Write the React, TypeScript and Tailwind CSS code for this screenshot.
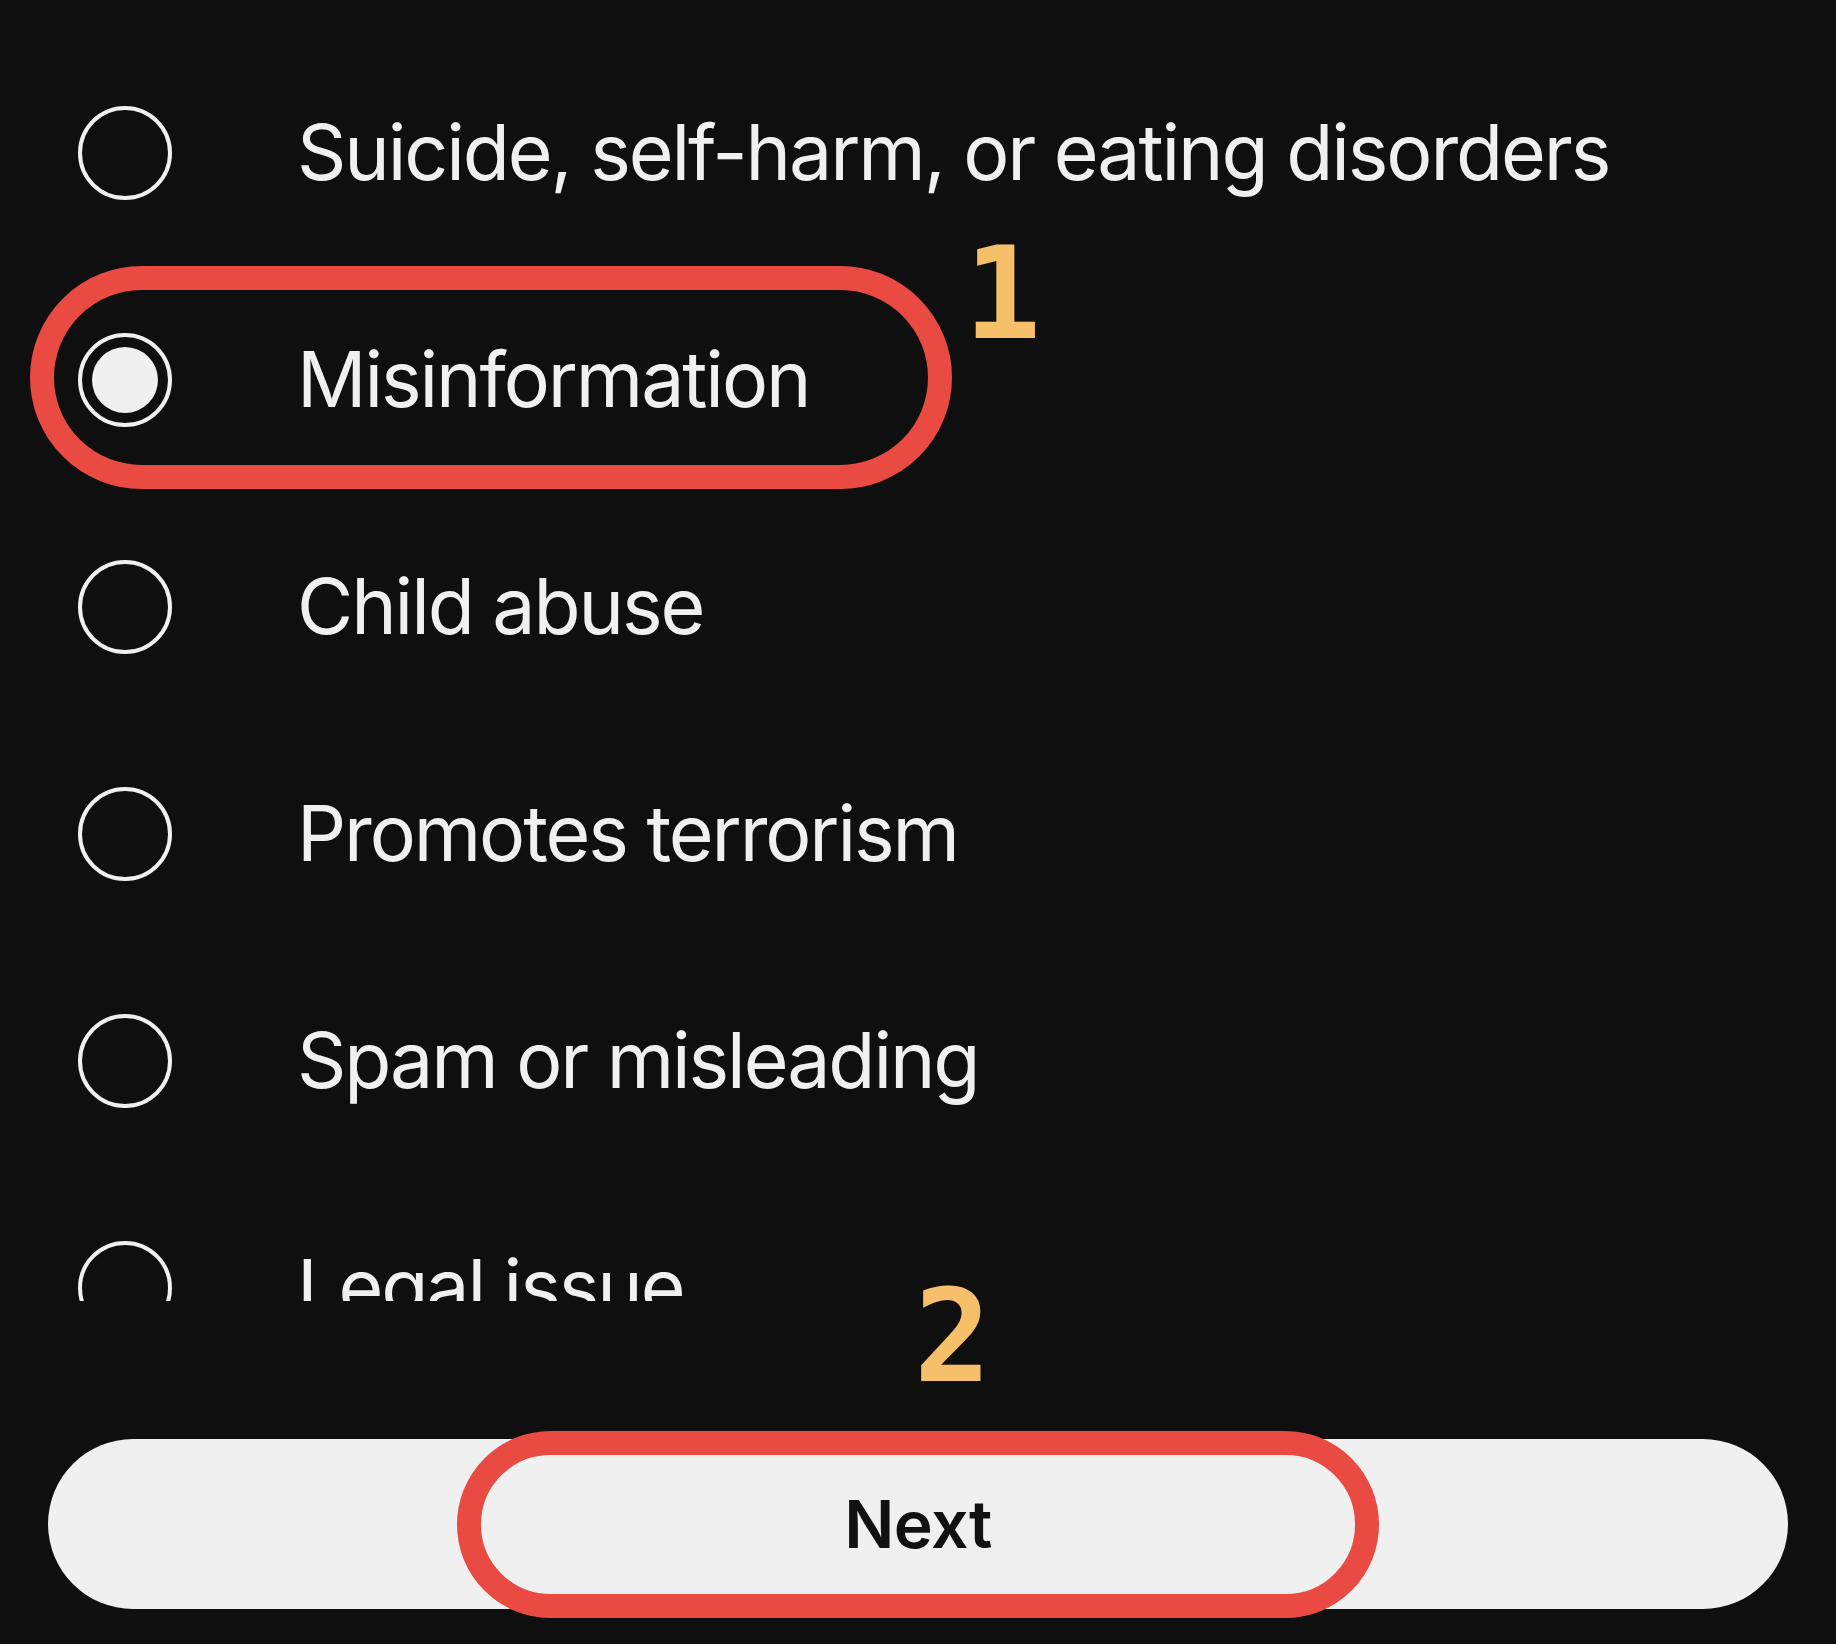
const reasons = [
  "Suicide, self-harm, or eating disorders",
  "Misinformation",
  "Child abuse",
  "Promotes terrorism",
  "Spam or misleading",
  "Legal issue",
];

function Radio({ checked }: { checked: boolean }) {
  return (
    <div className="flex items-center justify-center w-[94px] h-[94px] rounded-full border-[4px] border-[#f0f0f0] shrink-0">
      {checked && <div className="w-[66px] h-[66px] rounded-full bg-[#f0f0f0]" />}
    </div>
  );
}

export default function App() {
  const selected = 1;

  return (
    <div
      className="relative w-full h-[1644px] overflow-hidden bg-[#0f0f0f] text-[#f0f0f0]"
      style={{ fontFamily: "Inter, 'Open Sans', sans-serif" }}
    >
      {/* report reasons list, last row cut off by the scroll area */}
      <div className="h-[1301px] overflow-hidden pt-[39px]">
        {reasons.map((r, i) => (
          <div key={r} className="flex items-center h-[227px] pl-[78px] gap-[125px]">
            <Radio checked={i === selected} />
            <span className="text-[77px] leading-none tracking-[-2.1px]">{r}</span>
          </div>
        ))}
      </div>

      {/* bottom action */}
      <div className="pt-[138px] px-[48px]">
        <button className="w-full h-[170px] rounded-full bg-[#f0f0f0] text-[#111111] text-[66px] font-semibold tracking-[-0.5px]">
          Next
        </button>
      </div>

      {/* tutorial annotations */}
      <div className="absolute left-[30px] top-[266px] w-[922px] h-[223px] rounded-full border-[24px] border-[#e94a42]" />
      <div
        className="absolute left-[964px] top-[230px] text-[128px] leading-none font-bold text-[#f6c06b]"
        style={{ fontFamily: "'DejaVu Sans Mono', monospace" }}
      >
        1
      </div>
      <div className="absolute left-[457px] top-[1431px] w-[922px] h-[187px] rounded-full border-[24px] border-[#e94a42]" />
      <div
        className="absolute left-[914px] top-[1273px] text-[128px] leading-none font-bold text-[#f6c06b]"
        style={{ fontFamily: "'DejaVu Sans Mono', monospace" }}
      >
        2
      </div>
    </div>
  );
}
